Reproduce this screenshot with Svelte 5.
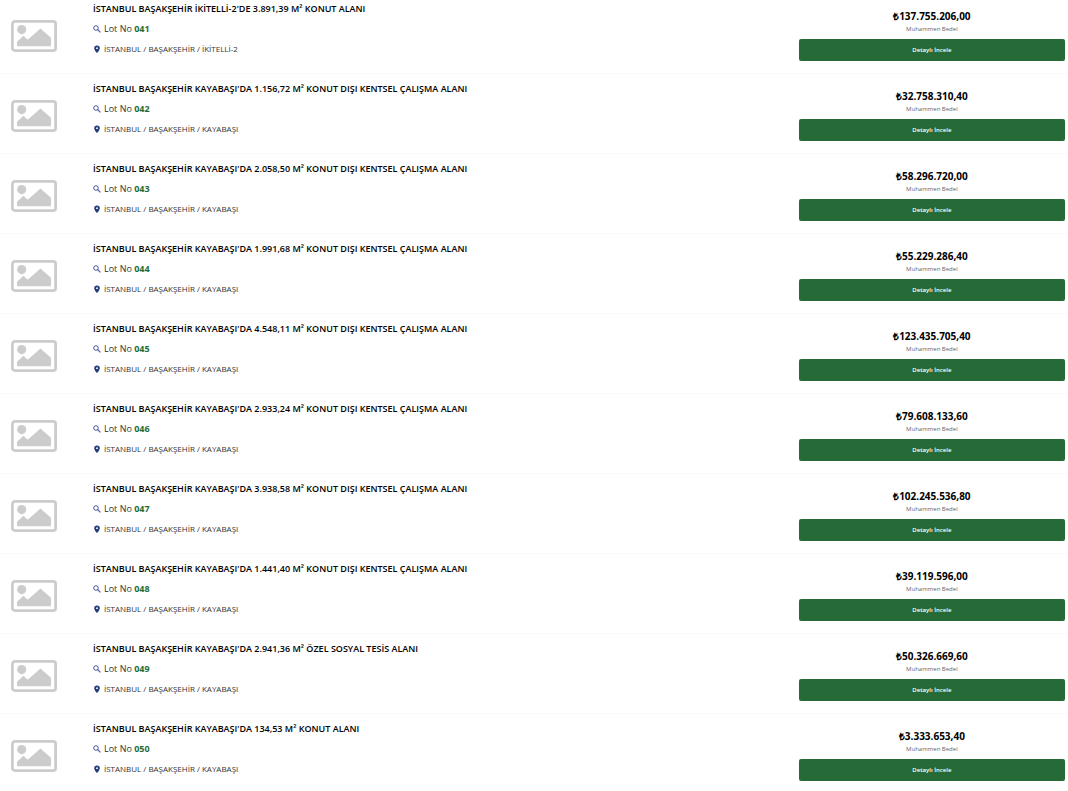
<script lang="ts">
	interface Lot {
		no: string;
		title: string;
		location: string;
		price: string;
	}

	const kayabasi = 'İSTANBUL / BAŞAKŞEHİR / KAYABAŞI';

	const lots: Lot[] = [
		{
			no: '041',
			title: "İSTANBUL BAŞAKŞEHİR İKİTELLİ-2'DE 3.891,39 M² KONUT ALANI",
			location: 'İSTANBUL / BAŞAKŞEHİR / İKİTELLİ-2',
			price: '137.755.206,00'
		},
		{
			no: '042',
			title: "İSTANBUL BAŞAKŞEHİR KAYABAŞI'DA 1.156,72 M² KONUT DIŞI KENTSEL ÇALIŞMA ALANI",
			location: kayabasi,
			price: '32.758.310,40'
		},
		{
			no: '043',
			title: "İSTANBUL BAŞAKŞEHİR KAYABAŞI'DA 2.058,50 M² KONUT DIŞI KENTSEL ÇALIŞMA ALANI",
			location: kayabasi,
			price: '58.296.720,00'
		},
		{
			no: '044',
			title: "İSTANBUL BAŞAKŞEHİR KAYABAŞI'DA 1.991,68 M² KONUT DIŞI KENTSEL ÇALIŞMA ALANI",
			location: kayabasi,
			price: '55.229.286,40'
		},
		{
			no: '045',
			title: "İSTANBUL BAŞAKŞEHİR KAYABAŞI'DA 4.548,11 M² KONUT DIŞI KENTSEL ÇALIŞMA ALANI",
			location: kayabasi,
			price: '123.435.705,40'
		},
		{
			no: '046',
			title: "İSTANBUL BAŞAKŞEHİR KAYABAŞI'DA 2.933,24 M² KONUT DIŞI KENTSEL ÇALIŞMA ALANI",
			location: kayabasi,
			price: '79.608.133,60'
		},
		{
			no: '047',
			title: "İSTANBUL BAŞAKŞEHİR KAYABAŞI'DA 3.938,58 M² KONUT DIŞI KENTSEL ÇALIŞMA ALANI",
			location: kayabasi,
			price: '102.245.536,80'
		},
		{
			no: '048',
			title: "İSTANBUL BAŞAKŞEHİR KAYABAŞI'DA 1.441,40 M² KONUT DIŞI KENTSEL ÇALIŞMA ALANI",
			location: kayabasi,
			price: '39.119.596,00'
		},
		{
			no: '049',
			title: "İSTANBUL BAŞAKŞEHİR KAYABAŞI'DA 2.941,36 M² ÖZEL SOSYAL TESİS ALANI",
			location: kayabasi,
			price: '50.326.669,60'
		},
		{
			no: '050',
			title: "İSTANBUL BAŞAKŞEHİR KAYABAŞI'DA 134,53 M² KONUT ALANI",
			location: kayabasi,
			price: '3.333.653,40'
		}
	];
</script>

<main class="lot-list">
	{#each lots as lot (lot.no)}
		<article class="lot">
			<svg class="lot-image" viewBox="0 0 46 32" aria-hidden="true">
				<rect x="1.4" y="1.4" width="43.2" height="29.2" rx="2.5" fill="none" stroke="#ccc" stroke-width="2.8" />
				<circle cx="10.7" cy="9.6" r="4.6" fill="#ccc" />
				<path d="M6 26.2v-4.4l6.5-6 4.2 4L29.4 8.5 40 17.8v8.4z" fill="#ccc" />
			</svg>

			<div class="lot-info">
				<h2>{lot.title}</h2>
				<div class="lot-line">
					<svg viewBox="0 0 8 8" aria-hidden="true">
						<circle cx="3" cy="3" r="2.3" fill="none" stroke="#4a559c" />
						<path d="M4.7 4.7 7.4 7.4" stroke="#4a559c" stroke-width="1.2" />
					</svg>
					<span>Lot No <strong>{lot.no}</strong></span>
				</div>
				<div class="lot-line lot-location">
					<svg viewBox="0 0 8 8" aria-hidden="true">
						<path
							fill="#213f7d"
							fill-rule="evenodd"
							d="M4 .4a2.8 2.8 0 0 0-2.8 2.8C1.2 5.2 4 8 4 8s2.8-2.8 2.8-4.8A2.8 2.8 0 0 0 4 .4zm0 1.9a.9.9 0 1 1 0 1.8.9.9 0 0 1 0-1.8z"
						/>
					</svg>
					<span>{lot.location}</span>
				</div>
			</div>

			<div class="lot-price">
				<div class="price">₺{lot.price}</div>
				<div class="price-label">Muhammen Bedel</div>
				<button type="button">Detaylı İncele</button>
			</div>
		</article>
	{/each}
</main>

<style>
	:global(body) {
		margin: 0;
		background: #fff;
		font-family: 'Open Sans', sans-serif;
		color: #333;
	}

	.lot {
		display: grid;
		grid-template-columns: 57px 1fr 25%;
		padding: 6px 3px 12px 0;
		border-bottom: 1px solid #fafafa;
	}

	/* the list is flush with the top of the page */
	.lot:first-child {
		padding-top: 0;
	}

	.lot:last-child {
		border-bottom: 0;
	}

	.lot-image {
		width: 46px;
		height: 32px;
		margin: 20px 0 0 11px;
	}

	.lot-info {
		padding-left: 36px;
	}

	h2 {
		margin: 0 0 1px;
		font-size: 9px;
		font-weight: 650;
		line-height: 18px;
		color: #000;
	}

	.lot-line {
		display: flex;
		align-items: center;
		gap: 3px;
		font-size: 9px;
		line-height: 20px;
	}

	.lot-line svg {
		width: 8px;
		height: 8px;
	}

	.lot-line strong {
		font-weight: 700;
		color: #1f6b35;
	}

	.lot-location {
		font-size: 8px;
	}

	.lot-price {
		padding-top: 9px;
		text-align: center;
	}

	.price {
		font-size: 10px;
		font-weight: 700;
		line-height: 14px;
		color: #000;
	}

	.price-label {
		font-size: 6px;
		line-height: 12px;
		color: #666;
	}

	button {
		display: block;
		width: 100%;
		height: 22px;
		margin-top: 4px;
		padding: 0;
		border: 0;
		border-radius: 2px;
		background: #256a37;
		color: #fff;
		font-family: inherit;
		font-size: 6px;
		font-weight: 600;
		cursor: pointer;
	}
</style>
